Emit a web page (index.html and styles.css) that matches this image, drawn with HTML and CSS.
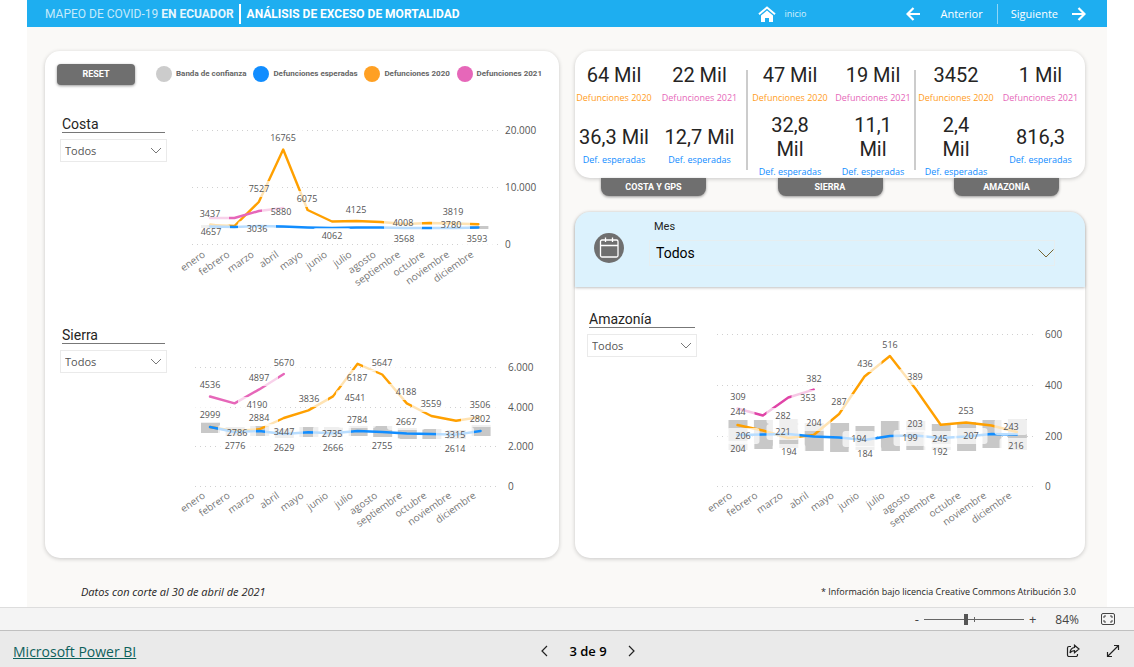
FILE: index.html
```html
<!DOCTYPE html>
<html lang="es">
<head>
<meta charset="utf-8">
<meta name="viewport" content="width=device-width, initial-scale=1">
<title>Análisis de exceso de mortalidad</title>
<link rel="stylesheet" href="styles.css">
</head>
<body>
<main class="report">
  <header class="topbar">
    <h1 class="brand"><span class="brand-main">MAPEO DE COVID-19 <b>EN ECUADOR</b></span><span class="brand-page">ANÁLISIS DE EXCESO DE MORTALIDAD</span></h1>
    <nav class="topnav">
      <a class="home" href="#inicio">
        <svg width="18" height="16" viewBox="0 0 18 16" aria-hidden="true"><path d="M1 8.200L9 1.500l8 6.700" fill="none" stroke="#fff" stroke-width="2"/><path d="M3 9.500l6-5 6 5V16h-4v-4H7v4H3z" fill="#fff"/></svg>
        <span>inicio</span>
      </a>
      <a class="step" href="#anterior">
        <svg width="14" height="14" viewBox="0 0 14 14" aria-hidden="true"><path d="M14 7H2M7.500 1L1.500 7l6 6" fill="none" stroke="#fff" stroke-width="2.200"/></svg>
        <span>Anterior</span>
      </a>
      <a class="step step-next" href="#siguiente">
        <span>Siguiente</span>
        <svg width="14" height="14" viewBox="0 0 14 14" aria-hidden="true"><path d="M0 7h12M6.500 1l6 6-6 6" fill="none" stroke="#fff" stroke-width="2.200"/></svg>
      </a>
    </nav>
  </header>

  <div class="board">
    <section class="panel panel-left">
      <div class="tools">
        <button class="reset" type="button">RESET</button>
        <ul class="legend">
          <li><i class="dot band"></i>Banda de confianza</li>
          <li><i class="dot expected"></i>Defunciones esperadas</li>
          <li><i class="dot y2020"></i>Defunciones 2020</li>
          <li><i class="dot y2021"></i>Defunciones 2021</li>
        </ul>
      </div>
      <div class="region">
        <div class="filter">
          <label for="costa">Costa</label>
          <div class="pick"><select id="costa"><option>Todos</option></select><svg width="12" height="7" viewBox="0 0 12 7" aria-hidden="true"><path d="M1 1l5 5 5-5"/></svg></div>
        </div>
        <svg class="chart" id="chart-costa" viewBox="175 112 370 203" role="img" aria-label="Costa"></svg>
      </div>
      <div class="region">
        <div class="filter">
          <label for="sierra">Sierra</label>
          <div class="pick"><select id="sierra"><option>Todos</option></select><svg width="12" height="7" viewBox="0 0 12 7" aria-hidden="true"><path d="M1 1l5 5 5-5"/></svg></div>
        </div>
        <svg class="chart" id="chart-sierra" viewBox="175 323 370 217" role="img" aria-label="Sierra"></svg>
      </div>
    </section>

    <div class="side">
      <section class="panel stats">
        <div class="group group-costa">
          <div class="stat"><strong>64 Mil</strong><span class="c2020">Defunciones 2020</span></div>
          <div class="stat"><strong>22 Mil</strong><span class="c2021">Defunciones 2021</span></div>
          <div class="stat"><strong>36,3 Mil</strong><span class="cexp">Def. esperadas</span></div>
          <div class="stat"><strong>12,7 Mil</strong><span class="cexp">Def. esperadas</span></div>
        </div>
        <div class="rule"></div>
        <div class="group group-sierra">
          <div class="stat"><strong>47 Mil</strong><span class="c2020">Defunciones 2020</span></div>
          <div class="stat"><strong>19 Mil</strong><span class="c2021">Defunciones 2021</span></div>
          <div class="stat"><strong>32,8<br>Mil</strong><span class="cexp">Def. esperadas</span></div>
          <div class="stat"><strong>11,1<br>Mil</strong><span class="cexp">Def. esperadas</span></div>
        </div>
        <div class="rule"></div>
        <div class="group group-amazonia">
          <div class="stat"><strong>3452</strong><span class="c2020">Defunciones 2020</span></div>
          <div class="stat"><strong>1 Mil</strong><span class="c2021">Defunciones 2021</span></div>
          <div class="stat"><strong>2,4<br>Mil</strong><span class="cexp">Def. esperadas</span></div>
          <div class="stat"><strong>816,3</strong><span class="cexp">Def. esperadas</span></div>
        </div>
      </section>
      <div class="tabs">
        <button type="button">COSTA Y GPS</button>
        <button type="button">SIERRA</button>
        <button type="button">AMAZONÍA</button>
      </div>
      <section class="panel panel-right">
        <div class="month">
          <svg class="calendar" width="30" height="30" viewBox="0 0 30 30" aria-hidden="true"><circle cx="15" cy="15" r="15" fill="#6f6f6f"/><g fill="none" stroke="#fff" stroke-width="1.300"><rect x="6.500" y="7" width="17.500" height="17" rx="1.500"/><path d="M6.500 12.500H24M11.500 4.500V9M18.500 4.500V9"/></g></svg>
          <div class="month-field">
            <label for="mes">Mes</label>
            <div class="pick pick-month"><select id="mes"><option>Todos</option></select><svg width="16" height="9" viewBox="0 0 16 9" aria-hidden="true"><path d="M.5 .5L8 8l7.500-7.500"/></svg></div>
          </div>
        </div>
        <div class="region region-amazonia">
          <div class="filter">
            <label for="amazonia">Amazonía</label>
            <div class="pick"><select id="amazonia"><option>Todos</option></select><svg width="12" height="7" viewBox="0 0 12 7" aria-hidden="true"><path d="M1 1l5 5 5-5"/></svg></div>
          </div>
          <svg class="chart" id="chart-amazonia" viewBox="703 307 370 225" role="img" aria-label="Amazonía"></svg>
        </div>
      </section>
    </div>
  </div>

  <div class="notes">
    <em>Datos con corte al 30 de abril de 2021</em>
    <small>* Información bajo licencia Creative Commons Atribución 3.0</small>
  </div>
</main>

<div class="zoombar">
  <button type="button" aria-label="Alejar">-</button>
  <input type="range" min="0" max="100" value="42" aria-label="Zoom">
  <button type="button" aria-label="Acercar">+</button>
  <span class="percent">84%</span>
  <button type="button" aria-label="Ajustar a la página"><svg width="14" height="12" viewBox="0 0 14 12" aria-hidden="true"><g fill="none" stroke="#444"><rect x=".5" y=".5" width="13" height="11" rx="1.500"/><path d="M3 5V3h2M9 3h2v2M11 7v2H9M5 9H3V7"/></g></svg></button>
</div>

<footer class="footer">
  <a class="product" href="#powerbi">Microsoft Power BI</a>
  <div class="pager">
    <button type="button" aria-label="Página anterior"><svg width="7" height="12" viewBox="0 0 7 12" aria-hidden="true"><path d="M6 1L1 6l5 5"/></svg></button>
    <span>3 de 9</span>
    <button type="button" aria-label="Página siguiente"><svg width="7" height="12" viewBox="0 0 7 12" aria-hidden="true"><path d="M1 1l5 5-5 5"/></svg></button>
  </div>
  <div class="actions">
    <button type="button" aria-label="Compartir"><svg width="14" height="14" viewBox="0 0 14 14" aria-hidden="true"><path d="M5 2.500H3a1.500 1.500 0 0 0-1.500 1.500v7A1.500 1.500 0 0 0 3 12.500h7a1.500 1.500 0 0 0 1.500-1.500v-1M8.500 1.200L13 5 8.500 8.700V6.600C6.500 6.600 5 7.400 4 9c.2-3 2-5.200 4.500-5.500z"/></svg></button>
    <button type="button" aria-label="Pantalla completa"><svg width="14" height="14" viewBox="0 0 14 14" aria-hidden="true"><path d="M1.500 12.500l11-11M8 1.500h4.500V6M1.500 8v4.500H6"/></svg></button>
  </div>
</footer>
<script src="charts.js"></script>
</body>
</html>
```
FILE: styles.css
```css
* { box-sizing: border-box; }

body {
  margin: 0;
  background: #fff;
  color: #252423;
  font-family: "Open Sans", "Noto Sans", sans-serif;
  font-size: 10px;
}

button, select { font: inherit; color: inherit; }
button { padding: 0; border: 0; background: none; cursor: pointer; }
a { color: inherit; text-decoration: none; }
svg { display: block; }

.report { max-width: 1080px; margin: 0 auto; background: #faf9f7; }

/* Top bar */
.topbar {
  display: flex;
  justify-content: space-between;
  align-items: center;
  height: 27px;
  padding: 0 21px 0 18px;
  background: #1eaef0;
  color: #fff;
}
.brand { display: flex; align-items: center; margin: 0; font: 400 12px/20px Roboto, sans-serif; }
.brand-main { padding-right: 5px; border-right: 2px solid #fff; color: #c5eafb; }
.brand-main b { color: #e6f6fd; }
.brand-page { padding-left: 6px; font-weight: 700; }
.topnav { display: flex; align-items: center; }
.home { display: flex; align-items: center; gap: 8px; margin-right: 100px; font-size: 9px; color: #d5f0fc; }
.step { display: flex; align-items: center; gap: 20px; padding-right: 14px; font-size: 11px; line-height: 20px; }
.step-next { padding: 0 0 0 13px; gap: 14px; border-left: 1px solid #8fd6f7; }

/* Board */
.board {
  display: grid;
  grid-template-columns: 514fr 510fr;
  gap: 16px;
  padding: 24px 22px 0 18px;
}
.panel { border-radius: 15px; background: #fff; box-shadow: 0 1px 4px rgba(0, 0, 0, .2); }
.panel-left { padding: 12px 14px 18px 12px; }
.side { display: flex; flex-direction: column; min-width: 0; }

.tools { display: flex; justify-content: space-between; align-items: center; height: 22px; margin-bottom: 27px; padding-right: 3px; }
.reset {
  width: 78px;
  height: 21px;
  border-radius: 4px;
  background: #6f6f6f;
  color: #fff;
  font: 700 9px/21px Roboto, sans-serif;
  box-shadow: 0 1px 3px rgba(0, 0, 0, .4);
}
.legend {
  display: flex;
  justify-content: space-between;
  width: 386px;
  margin: 0;
  padding: 0;
  list-style: none;
  color: #666;
  font: 700 8px/16px Roboto, sans-serif;
}
.legend li { display: flex; align-items: center; gap: 4px; }
.dot { width: 16px; height: 16px; border-radius: 50%; }
.band { background: #ccc; }
.expected { background: #118dff; }
.y2020 { background: #ffa023; }
.y2021 { background: #e667b9; }

.region { display: grid; grid-template-columns: 107px minmax(0, 1fr); gap: 8px; padding-left: 3px; }
.region + .region { margin-top: 8px; }
.filter { display: flex; flex-direction: column; gap: 6px; padding-top: 4px; }
.filter label {
  margin: 0 2px;
  border-bottom: 1px solid #777;
  font: 400 14px/16px Roboto, sans-serif;
}
.pick { display: grid; align-items: center; }
.pick > * { grid-area: 1 / 1; }
.pick select {
  width: 100%;
  height: 23px;
  padding: 0 4px;
  border: 1px solid #eaeaea;
  border-radius: 0;
  background: transparent;
  color: #555;
  font-size: 11px;
  appearance: none;
}
.pick svg { justify-self: end; margin-right: 5px; fill: none; stroke: #777; pointer-events: none; }
.chart { width: 100%; height: auto; }

/* Chart marks */
.grid { stroke: #d0d0d0; stroke-dasharray: 1 4; }
.bar { fill: #c8c8c8; }
.line { fill: none; stroke-width: 2.4; stroke-linejoin: round; stroke-linecap: round; }
.line-expected { stroke: #118dff; }
.line-2020 { stroke: #ffa000; }
.line-2021 { stroke: #e667b9; }
#chart-amazonia .line-2021 { stroke: #e044a7; }
.label-bg { fill: #fff; fill-opacity: .7; }
.value { font-size: 9px; fill: #555; text-anchor: middle; }
.tick { font-size: 10px; fill: #555; }
.month-tick { font-size: 10px; fill: #777; text-anchor: end; }

/* Totals */
.stats { display: grid; grid-template-columns: 171fr 2px 166fr 2px 169fr; padding-top: 12px; }
.rule { margin: 7px 0 8px; background: #ccc; }
.group { display: grid; grid-template-rows: 42px 64px; row-gap: 9px; }
.group-costa { grid-template-columns: 78fr 93fr; }
.group-sierra { grid-template-columns: 84fr 82fr; }
.group-amazonia { grid-template-columns: 80fr 89fr; }
.stat { display: flex; flex-direction: column; justify-content: center; align-items: center; gap: 4px; text-align: center; white-space: nowrap; }
.stat strong { font: 400 20px/24px Roboto, sans-serif; }
.stat span { font-size: 9px; line-height: 14px; }
.c2020 { color: #ff9d1c; }
.c2021 { color: #e667b9; }
.cexp { color: #118dff; }

.tabs { display: flex; justify-content: space-between; padding: 0 26px; margin-bottom: 16px; }
.tabs button {
  width: 105px;
  height: 18px;
  border-radius: 0 0 8px 8px;
  background: #6f6f6f;
  color: #fff;
  font: 700 9px/18px Roboto, sans-serif;
  box-shadow: 0 1px 3px rgba(0, 0, 0, .4);
}

.panel-right { flex: 1; }
.month {
  display: flex;
  gap: 25px;
  padding: 7px 30px 21px 19px;
  border-radius: 15px 15px 0 0;
  background: #dcf2fd;
  box-shadow: 0 1px 3px rgba(0, 0, 0, .25);
}
.calendar { margin-top: 14px; }
.month-field { flex: 1; }
.month-field label { display: block; margin: 0 0 5px 5px; font: 400 11px/16px Roboto, sans-serif; }
.pick-month select { height: 26px; border-color: #e6eef0; padding: 0 6px; color: #000; font: 400 14px/24px Roboto, sans-serif; }
.pick-month svg { margin-right: 1px; stroke: #776633; }
.region-amazonia { grid-template-columns: 110px minmax(0, 1fr); gap: 6px; padding: 20px 12px 26px 12px; }

.notes { display: flex; justify-content: space-between; align-items: center; height: 49px; padding: 18px 31px 0 54px; }
.notes em { font-size: 11px; }
.notes small { font-size: 9px; }

/* Viewer chrome */
.zoombar {
  display: flex;
  justify-content: flex-end;
  align-items: center;
  height: 23px;
  padding-right: 19px;
  border-top: 1px solid #ddd;
  background: #f4f4f4;
  color: #444;
  font-size: 13px;
}
.zoombar input {
  width: 100px;
  height: 12px;
  margin: 0 5px;
  appearance: none;
  background:
    linear-gradient(#666, #666) 50px 50% / 1px 5px no-repeat,
    linear-gradient(#666, #666) 0 50% / 100% 1px no-repeat;
}
.zoombar input::-webkit-slider-thumb { appearance: none; width: 4px; height: 11px; background: #555; }
.percent { margin: 0 22px 0 19px; font-size: 12px; }

.footer {
  display: grid;
  grid-template-columns: 1fr auto 1fr;
  align-items: center;
  height: 37px;
  padding: 4px 14px 0 13px;
  border-top: 1px solid #c0c0c0;
  background: #eaeaea;
  color: #000;
}
.product { justify-self: start; color: #0d615c; font-size: 14px; text-decoration: underline; }
.pager { display: flex; align-items: center; gap: 21px; margin-right: -43px; font-size: 13px; font-weight: 600; }
.actions { display: flex; justify-self: end; gap: 26px; }
.footer svg { fill: none; stroke: #222; stroke-width: 1.2; }
```
FILE: charts.js
```js
const MONTHS = ["enero", "febrero", "marzo", "abril", "mayo", "junio", "julio", "agosto", "septiembre", "octubre", "noviembre", "diciembre"];

const CHARTS = {
  "chart-costa": {
    x0: 210, step: 24.4, grid: [192, 498], tickX: 505, monthX: 206, monthY: 256,
    ticks: [["20.000", 131], ["10.000", 188], ["0", 245]],
    bars: [[225, 228], [226, 228], [225, 227], [226, 228], [227, 228], [227, 228], [227, 228], [227, 228], [227, 228], [227, 228], [227, 228], [226, 229]],
    y2020: [225, 226, 202, 149.5, 210, 221.5, 221, 222, 224, 223, 223.5, 224.3],
    expected: [226.5, 227, 226, 226.5, 227.5, 228, 227.5, 227.5, 228, 228, 228, 227.5],
    y2021: [218, 218, 211, 208],
    labels: [["3437", 210, 214], ["4657", 211, 232], ["7527", 259, 189], ["16765", 283, 138], ["6075", 307, 199], ["3036", 257, 229], ["5880", 281, 212], ["4062", 332, 236], ["4125", 356, 210], ["4008", 403, 223], ["3568", 404, 239], ["3819", 453, 212], ["3780", 451, 225], ["3593", 477, 239]]
  },
  "chart-sierra": {
    x0: 210, step: 24.6, grid: [195, 500], tickX: 508, monthX: 206, monthY: 497,
    ticks: [["6.000", 368], ["4.000", 408], ["2.000", 447], ["0", 487]],
    bars: [[422, 433], [427, 436], [426, 436], [429, 438], [427, 437], [427, 437], [426, 436], [426, 437], [428, 439], [429, 439], [430, 439], [425, 436]],
    y2020: [427, 431, 429.3, 418, 410.4, 396.4, 363.8, 374.5, 403.4, 416, 420.8, 417],
    expected: [427, 432, 431, 434, 432.3, 433.3, 431, 432, 433.5, 434, 434.6, 431],
    y2021: [396.5, 403.4, 389.4, 374],
    labels: [["4536", 210, 385], ["2999", 210, 415], ["4897", 259, 378], ["5670", 284, 363], ["4190", 257, 405], ["2884", 259, 418], ["2786", 237, 433], ["2776", 235, 446], ["3447", 284, 432], ["2629", 284, 448], ["3836", 309, 399], ["2735", 332, 434], ["2666", 333, 448], ["6187", 357, 378], ["4541", 355, 398], ["2784", 357, 420], ["5647", 382, 363], ["2755", 382, 446], ["4188", 406, 392], ["3559", 431, 404], ["2667", 406, 422], ["3506", 480, 405], ["2802", 480, 419], ["3315", 455, 435], ["2614", 455, 449]]
  },
  "chart-amazonia": {
    x0: 737.5, step: 25.4, grid: [717, 1037], tickX: 1045, monthX: 733, monthY: 497,
    ticks: [["600", 335], ["400", 386], ["200", 437], ["0", 487]],
    bars: [[420, 450], [420, 449], [419, 448], [423, 451], [423, 452], [426, 450], [421, 451], [421, 450], [424, 450], [422, 451], [420, 448], [419, 450]],
    y2020: [425, 430.5, 438, 435, 414, 376.5, 356, 388.5, 424.7, 422.5, 425.5, 432],
    expected: [435, 434.5, 434, 436.5, 437.5, 440, 436, 435.5, 438, 436.5, 434, 434.5],
    y2021: [408.5, 415.5, 397.5, 389.6],
    labels: [["309", 738, 397], ["244", 738, 412], ["206", 743, 436], ["204", 738, 449], ["382", 814, 379], ["353", 808, 398], ["282", 783, 416], ["221", 783, 432], ["204", 814, 423], ["194", 789, 452], ["287", 839, 402], ["436", 865, 364], ["516", 890, 345], ["389", 915, 377], ["194", 859, 439], ["184", 865, 454], ["203", 915, 424], ["199", 910, 438], ["245", 940, 439], ["192", 940, 452], ["253", 966, 411], ["207", 971, 436], ["243", 1011, 427], ["216", 1016, 446]]
  }
};

function line(chart, values, name) {
  const points = values.map((y, i) => `${chart.x0 + i * chart.step},${y}`).join(" ");
  return `<polyline class="line ${name}" points="${points}"/>`;
}

function draw(chart) {
  const parts = [];
  for (const [text, y] of chart.ticks) {
    parts.push(`<line class="grid" x1="${chart.grid[0]}" x2="${chart.grid[1]}" y1="${y - 0.5}" y2="${y - 0.5}"/>`);
    parts.push(`<text class="tick" x="${chart.tickX}" y="${y + 3}">${text}</text>`);
  }
  chart.bars.forEach(([top, bottom], i) => {
    parts.push(`<rect class="bar" x="${chart.x0 + i * chart.step - 9}" y="${top}" width="19" height="${bottom - top}"/>`);
  });
  parts.push(line(chart, chart.y2020, "line-2020"));
  parts.push(line(chart, chart.y2021, "line-2021"));
  parts.push(line(chart, chart.expected, "line-expected"));
  for (const [text, x, y] of chart.labels) {
    const width = text.length * 5 + 18;
    parts.push(`<rect class="label-bg" x="${x - width / 2}" y="${y - 8}" width="${width}" height="16" rx="3"/>`);
  }
  for (const [text, x, y] of chart.labels) {
    parts.push(`<text class="value" x="${x}" y="${y + 3}">${text}</text>`);
  }
  MONTHS.forEach((month, i) => {
    const x = chart.monthX + i * chart.step;
    parts.push(`<text class="month-tick" transform="translate(${x} ${chart.monthY}) rotate(-35)">${month}</text>`);
  });
  return parts.join("");
}

for (const [id, chart] of Object.entries(CHARTS)) {
  document.getElementById(id).innerHTML = draw(chart);
}
```
